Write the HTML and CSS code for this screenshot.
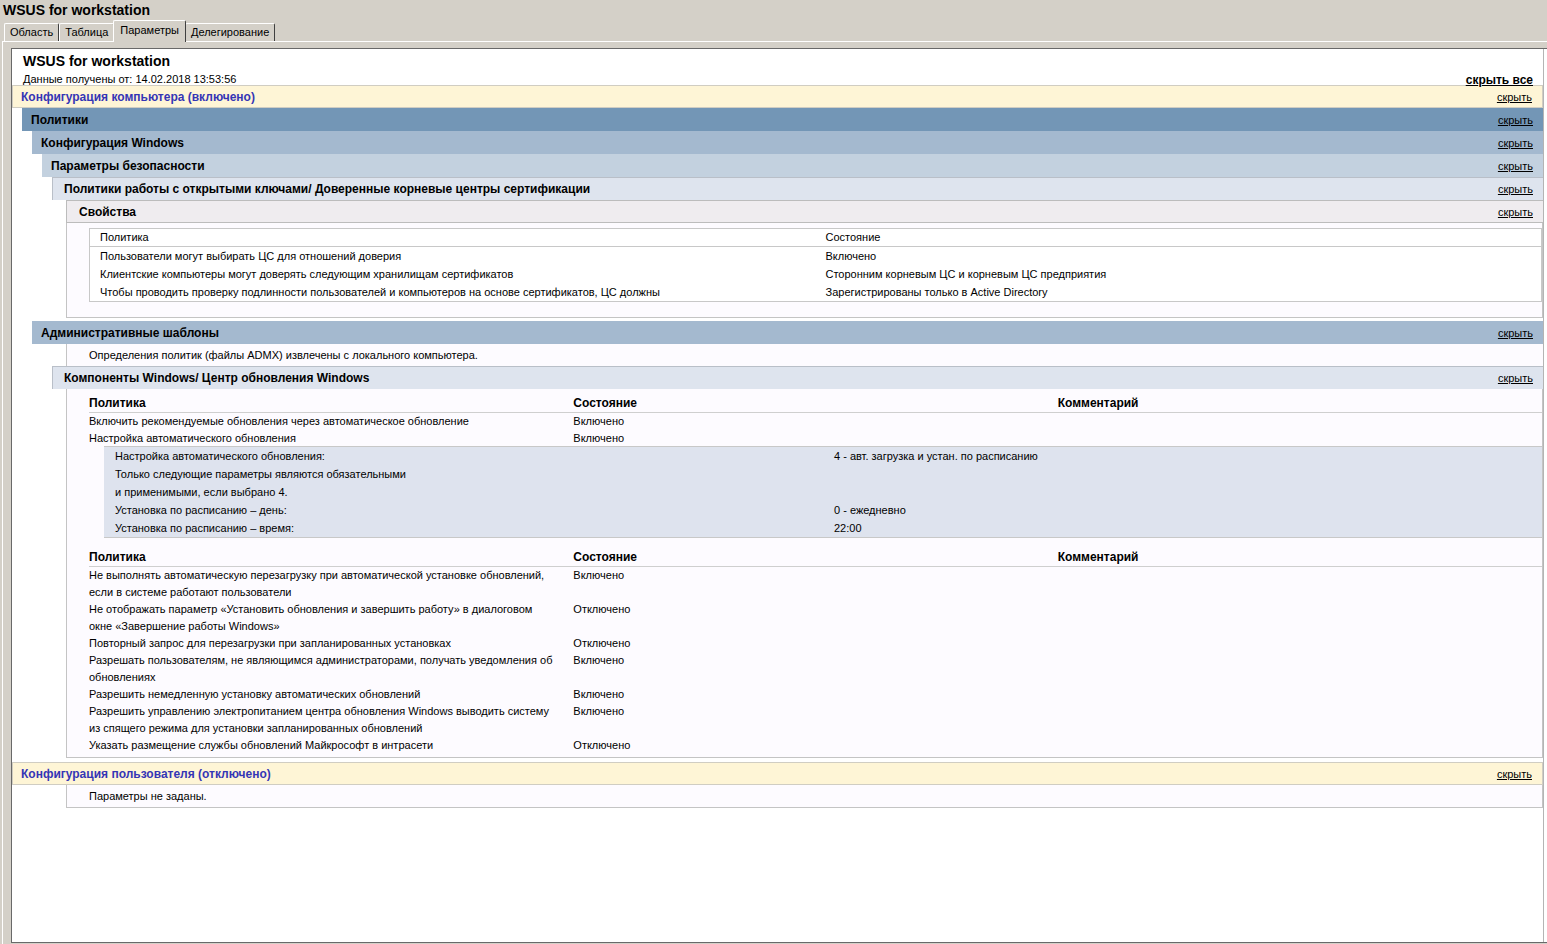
FILE: index.html
```html
<!DOCTYPE html>
<html lang="ru">
<head>
<meta charset="utf-8">
<title>WSUS for workstation</title>
<link rel="stylesheet" href="styles.css">
</head>
<body>
<div class="window">
  <div class="app-title">WSUS for workstation</div>
  <div class="tabs">
    <div class="tab">Область</div>
    <div class="tab">Таблица</div>
    <div class="tab active">Параметры</div>
    <div class="tab">Делегирование</div>
  </div>
  <div class="panel">
    <div class="frame">
      <div class="report">
        <div class="report-head">
          <div>
            <div class="report-title">WSUS for workstation</div>
            <div class="report-date">Данные получены от: 14.02.2018 13:53:56</div>
          </div>
          <a class="hide-all">скрыть все</a>
        </div>

        <div class="band he0"><span>Конфигурация компьютера (включено)</span><a class="hide">скрыть</a></div>
        <div class="band he1 lvl1"><span>Политики</span><a class="hide">скрыть</a></div>
        <div class="band he2 lvl2"><span>Конфигурация Windows</span><a class="hide">скрыть</a></div>
        <div class="band he3 lvl3"><span>Параметры безопасности</span><a class="hide">скрыть</a></div>
        <div class="band he4 lvl4"><span>Политики работы с открытыми ключами/ Доверенные корневые центры сертификации</span><a class="hide">скрыть</a></div>
        <div class="band he5 lvl5"><span>Свойства</span><a class="hide">скрыть</a></div>
        <div class="body props-body">
          <div class="props">
            <div class="props-row props-head"><span>Политика</span><span>Состояние</span></div>
            <div class="props-row"><span>Пользователи могут выбирать ЦС для отношений доверия</span><span>Включено</span></div>
            <div class="props-row"><span>Клиентские компьютеры могут доверять следующим хранилищам сертификатов</span><span>Сторонним корневым ЦС и корневым ЦС предприятия</span></div>
            <div class="props-row"><span>Чтобы проводить проверку подлинности пользователей и компьютеров на основе сертификатов, ЦС должны</span><span>Зарегистрированы только в Active Directory</span></div>
          </div>
        </div>

        <div class="band he2 lvl2 gap"><span>Административные шаблоны</span><a class="hide">скрыть</a></div>
        <div class="body note-body">Определения политик (файлы ADMX) извлечены с локального компьютера.</div>
        <div class="band he4 lvl4"><span>Компоненты Windows/ Центр обновления Windows</span><a class="hide">скрыть</a></div>
        <div class="body wu-body">
          <div class="ptable">
            <div class="prow phead"><span>Политика</span><span>Состояние</span><span>Комментарий</span></div>
            <div class="prow"><span>Включить рекомендуемые обновления через автоматическое обновление</span><span>Включено</span><span></span></div>
            <div class="prow"><span>Настройка автоматического обновления</span><span>Включено</span><span></span></div>
          </div>
          <div class="subblock">
            <div class="subrow"><span>Настройка автоматического обновления:</span><span>4 - авт. загрузка и устан. по расписанию</span></div>
            <div class="subrow"><span>Только следующие параметры являются обязательными</span><span></span></div>
            <div class="subrow"><span>и применимыми, если выбрано 4.</span><span></span></div>
            <div class="subrow"><span>Установка по расписанию – день:</span><span>0 - ежедневно</span></div>
            <div class="subrow"><span>Установка по расписанию – время:</span><span>22:00</span></div>
          </div>
          <div class="ptable second">
            <div class="prow phead"><span>Политика</span><span>Состояние</span><span>Комментарий</span></div>
            <div class="prow"><span>Не выполнять автоматическую перезагрузку при автоматической установке обновлений,<br>если в системе работают пользователи</span><span>Включено</span><span></span></div>
            <div class="prow"><span>Не отображать параметр «Установить обновления и завершить работу» в диалоговом<br>окне «Завершение работы Windows»</span><span>Отключено</span><span></span></div>
            <div class="prow"><span>Повторный запрос для перезагрузки при запланированных установках</span><span>Отключено</span><span></span></div>
            <div class="prow"><span>Разрешать пользователям, не являющимся администраторами, получать уведомления об<br>обновлениях</span><span>Включено</span><span></span></div>
            <div class="prow"><span>Разрешить немедленную установку автоматических обновлений</span><span>Включено</span><span></span></div>
            <div class="prow"><span>Разрешить управлению электропитанием центра обновления Windows выводить систему<br>из спящего режима для установки запланированных обновлений</span><span>Включено</span><span></span></div>
            <div class="prow"><span>Указать размещение службы обновлений Майкрософт в интрасети</span><span>Отключено</span><span></span></div>
          </div>
        </div>

        <div class="band he0 gap-user"><span>Конфигурация пользователя (отключено)</span><a class="hide">скрыть</a></div>
        <div class="body user-body">Параметры не заданы.</div>
      </div>
      <div class="vscroll"></div>
    </div>
  </div>
</div>
</body>
</html>
```

FILE: styles.css
```css
* { box-sizing: border-box; margin: 0; padding: 0; }
html, body { height: 100%; }
body {
  background: #d4d0c8;
  font-family: "Liberation Sans", Arial, sans-serif;
  font-size: 11px;
  color: #000;
  overflow: hidden;
}
.window { height: 944px; display: flex; flex-direction: column; }

.app-title {
  height: 20px;
  padding: 2px 0 0 3px;
  font-weight: bold;
  font-size: 14px;
  line-height: 17px;
}

.tabs {
  height: 21px;
  display: flex;
  align-items: flex-end;
  padding-left: 4px;
  position: relative;
  z-index: 2;
}
.tab {
  height: 18px;
  padding: 0 5px;
  line-height: 17px;
  font-size: 11px;
  background: #d4d0c8;
  border-top: 1px solid #ffffff;
  border-left: 1px solid #ffffff;
  border-right: 1px solid #404040;
  border-top-left-radius: 2px;
  border-top-right-radius: 2px;
}
.tab.active {
  height: 22px;
  margin: 0 -1px -1px -1px;
  padding: 1px 6px 0 6px;
  line-height: 17px;
  position: relative;
  z-index: 3;
}

.panel {
  flex: 1;
  margin-left: 2px;
  border-top: 1px solid #ffffff;
  border-left: 1px solid #ffffff;
  padding: 6px 0 1px 8px;
  display: flex;
  min-height: 0;
}
.frame {
  flex: 1;
  display: flex;
  background: #ffffff;
  border-top: 1px solid #696969;
  border-left: 1px solid #696969;
  border-bottom: 1px solid #696969;
  min-height: 0;
}
.report { flex: 1; min-width: 0; }
.vscroll {
  width: 4px;
  border-left: 1px solid #b4b4b4;
  background: #ffffff;
}

.report-head {
  display: flex;
  justify-content: space-between;
  align-items: flex-end;
  padding: 4px 10px 0 11px;
  height: 37px;
  margin-bottom: -1px;
  position: relative;
  z-index: 1;
}
.report-title { font-size: 14px; font-weight: bold; line-height: 17px; }
.report-date { margin-top: 2px; line-height: 14px; font-size: 11px; }
.hide-all {
  font-size: 12px;
  font-weight: bold;
  text-decoration: underline;
  line-height: 14px;
  color: #000;
  margin-bottom: -1px;
}

.band {
  height: 23px;
  display: flex;
  justify-content: space-between;
  align-items: center;
  font-weight: bold;
  font-size: 12px;
  padding: 0 10px 0 9px;
}
.band .hide {
  font-weight: normal;
  font-size: 11px;
  color: #000;
  text-decoration: underline;
}
.he0 {
  background: #fef5d6;
  color: #3535b5;
  border: 1px solid #d0cdc2;
  padding-left: 8px;
}
.he1 { background: #7396b6; }
.he2 { background: #a4b9cf; }
.he3 { background: #c3d1df; }
.he4 {
  background: #dee4ee;
  border-top: 1px solid #b9bfc8;
  border-left: 1px solid #b9bfc8;
  padding-left: 11px;
}
.he5 {
  background: #efecef;
  border-top: 1px solid #bcbcbc;
  border-left: 1px solid #bcbcbc;
  border-bottom: 1px solid #bcbcbc;
  padding-left: 12px;
}
.lvl1 { margin-left: 10px; }
.lvl2 { margin-left: 20px; }
.lvl3 { margin-left: 30px; }
.lvl4 { margin-left: 40px; }
.lvl5 { margin-left: 54px; }
.gap { margin-top: 3px; }
.gap-user { margin-top: 4px; }

.body {
  margin-left: 54px;
  background: #fdfbff;
  border-left: 1px solid #c4c4c4;
}

.props-body {
  padding: 5px 0 15px 22px;
  border-right: 1px solid #c4c4c4;
  border-bottom: 1px solid #c4c4c4;
}
.props {
  border: 1px solid #c8c8c8;
  background: #ffffff;
}
.props-row {
  display: grid;
  grid-template-columns: 1fr 1fr;
  height: 18px;
  line-height: 18px;
}
.props-row span { padding-left: 10px; white-space: nowrap; overflow: hidden; }
.props-head { height: 18px; line-height: 17px; border-bottom: 1px solid #c8c8c8; }

.note-body {
  padding: 4px 0 4px 22px;
  line-height: 14px;
  height: 22px;
}

.wu-body {
  padding: 6px 0 3px 22px;
  border-right: 1px solid #c4c4c4;
  border-bottom: 1px solid #c4c4c4;
}
.ptable.second { margin-top: 11px; }
.prow {
  display: grid;
  grid-template-columns: 1fr 1fr 1fr;
  line-height: 17px;
}
.prow span { white-space: nowrap; }
.phead {
  font-weight: bold;
  font-size: 12px;
  border-bottom: 1px solid #cfcfcf;
}
.subblock {
  margin-top: -1px;
  margin-left: 15px;
  background: #dee3ee;
  border-top: 1px solid #c8c8c8;
  border-bottom: 1px solid #c8c8c8;
  position: relative;
}
.subrow {
  display: grid;
  grid-template-columns: 1fr 1fr;
  line-height: 18px;
}
.subrow span { padding-left: 11px; white-space: nowrap; }

.user-body {
  padding: 4px 0 4px 22px;
  line-height: 14px;
  border-right: 1px solid #c4c4c4;
  border-bottom: 1px solid #c4c4c4;
}
```
